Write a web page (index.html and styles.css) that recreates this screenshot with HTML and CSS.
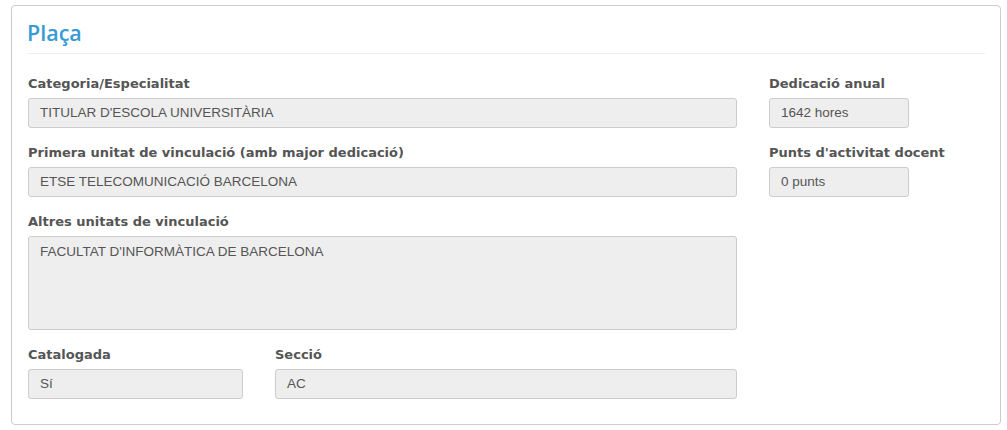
FILE: index.html
```html
<!DOCTYPE html>
<html lang="ca">
<head>
<meta charset="utf-8">
<title>Plaça</title>
<link rel="stylesheet" href="styles.css">
</head>
<body>
<section class="card">
  <h2 class="card-title">Plaça</h2>
  <div class="form">
    <div class="col-main">
      <div class="group">
        <div class="label">Categoria/Especialitat</div>
        <div class="field">TITULAR D'ESCOLA UNIVERSITÀRIA</div>
      </div>
      <div class="group">
        <div class="label">Primera unitat de vinculació (amb major dedicació)</div>
        <div class="field">ETSE TELECOMUNICACIÓ BARCELONA</div>
      </div>
      <div class="group">
        <div class="label">Altres unitats de vinculació</div>
        <div class="field area">FACULTAT D'INFORMÀTICA DE BARCELONA</div>
      </div>
      <div class="row-split">
        <div class="group">
          <div class="label">Catalogada</div>
          <div class="field">Sí</div>
        </div>
        <div class="group">
          <div class="label">Secció</div>
          <div class="field">AC</div>
        </div>
      </div>
    </div>
    <div class="col-side">
      <div class="group">
        <div class="label">Dedicació anual</div>
        <div class="field">1642 hores</div>
      </div>
      <div class="group">
        <div class="label">Punts d'activitat docent</div>
        <div class="field">0 punts</div>
      </div>
    </div>
  </div>
</section>
</body>
</html>
```

FILE: styles.css
```css
html, body {
  margin: 0;
  padding: 0;
  background: #fff;
}
body {
  font-family: "Liberation Sans", Arial, sans-serif;
}
.card {
  box-sizing: border-box;
  width: 990px;
  height: 420px;
  margin: 5px 0 0 11px;
  border: 1px solid #cccccc;
  border-radius: 4px;
  padding: 0 15px 0 15px;
}
.card-title {
  margin: 0;
  padding: 12px 0 5px 0;
  line-height: 30px;
  font-family: "Open Sans", sans-serif;
  font-weight: 600;
  font-size: 21.5px;
  color: #369bd3;
  border-bottom: 1px solid #eeeeee;
}
.form {
  display: grid;
  grid-template-columns: 709px 140px;
  column-gap: 32px;
  padding: 21px 0 0 1px;
}
.label {
  font-family: "DejaVu Sans", Verdana, sans-serif;
  font-weight: bold;
  font-size: 13px;
  line-height: 18px;
  color: #555555;
  margin-bottom: 5px;
  white-space: nowrap;
}
.group {
  margin-bottom: 16px;
}
.field {
  box-sizing: border-box;
  height: 30px;
  border: 1px solid #cccccc;
  border-radius: 3px;
  background: #eeeeee;
  color: #555555;
  font-size: 13.5px;
  line-height: 28px;
  padding: 0 11px;
}
.field.area {
  height: 94px;
  padding-top: 1px;
}
.row-split {
  display: grid;
  grid-template-columns: 215px 462px;
  column-gap: 32px;
}
```
